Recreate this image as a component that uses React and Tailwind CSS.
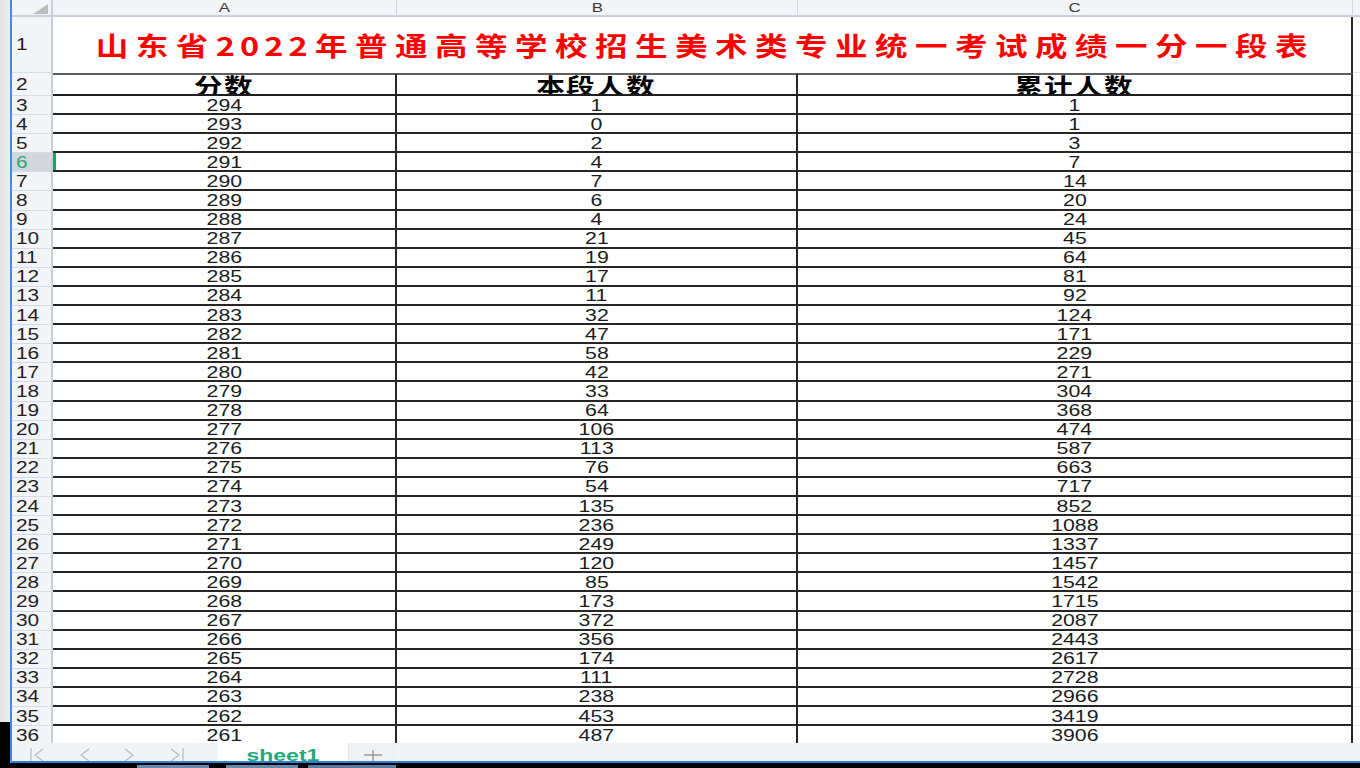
import React from 'react';

const rows = [
  [294, 1, 1], [293, 0, 1], [292, 2, 3], [291, 4, 7], [290, 7, 14], [289, 6, 20],
  [288, 4, 24], [287, 21, 45], [286, 19, 64], [285, 17, 81], [284, 11, 92],
  [283, 32, 124], [282, 47, 171], [281, 58, 229], [280, 42, 271], [279, 33, 304],
  [278, 64, 368], [277, 106, 474], [276, 113, 587], [275, 76, 663], [274, 54, 717],
  [273, 135, 852], [272, 236, 1088], [271, 249, 1337], [270, 120, 1457],
  [269, 85, 1542], [268, 173, 1715], [267, 372, 2087], [266, 356, 2443],
  [265, 174, 2617], [264, 111, 2728], [263, 238, 2966], [262, 453, 3419],
  [261, 487, 3906],
];

const grid = 'grid grid-cols-[41px_344px_401px_555px_7px]';
const sans = "font-['Liberation_Sans','Noto_Sans_CJK_SC',sans-serif]";
const cjk = "font-['Noto_Sans_CJK_SC','Liberation_Sans',sans-serif]";

const RowHead = ({ n, active }) => (
  <div
    className={`flex items-center overflow-hidden border-b border-r-2 border-b-[#d6dce6] border-r-[#c6cedb] pl-[4px] pt-[1px] ${
      active ? 'bg-[#d3d7dd] text-[#27a673]' : 'bg-[#f3f5f9] text-[#1f1f1f]'
    }`}
  >
    <span className={`${sans} inline-block origin-left scale-x-[1.3] text-[16px] leading-none`}>{n}</span>
  </div>
);

const Cell = ({ children, active }) => (
  <div className="relative flex items-center justify-center overflow-hidden border-r-2 border-b-2 border-[#262626] bg-white pt-[2px]">
    {active && <span className="absolute left-0 top-0 bottom-0 w-[3px] bg-[#1fa463]" />}
    <span className={`${sans} inline-block scale-x-[1.33] text-[16px] leading-none text-[#1c1c1c]`}>{children}</span>
  </div>
);

const Gutter = () => <div className="border-b border-[#e1e6ee] bg-white" />;

const Chevron = ({ dir, bar }) => (
  <svg width="18" height="14" viewBox="0 0 18 14" className="block">
    {bar === 'left' && <line x1="2" y1="1" x2="2" y2="14" stroke="#b7b9bd" strokeWidth="1.2" />}
    {bar === 'right' && <line x1="16" y1="1" x2="16" y2="14" stroke="#b7b9bd" strokeWidth="1.2" />}
    {dir === 'left' ? (
      <polyline points="14,2 6,8 14,14" fill="none" stroke="#b7b9bd" strokeWidth="1.2" />
    ) : (
      <polyline points="4,2 12,8 4,14" fill="none" stroke="#b7b9bd" strokeWidth="1.2" />
    )}
  </svg>
);

export default function App() {
  return (
    <div className="flex h-[768px] w-[1360px] flex-col overflow-hidden bg-black">
      <div className="flex h-[763px] shrink-0">
        <div className="flex w-[10px] flex-col">
          <div className="h-[722px] bg-gradient-to-r from-[#e4e4e4] to-[#ededed]" />
          <div className="flex-1 bg-black" />
        </div>
        <div className="w-[2px] bg-[#3a8ee3]" />

        <div className="flex flex-1 flex-col border-b-2 border-[#2f80d4]">
          {/* sheet */}
          <div className="h-[743px] shrink-0 overflow-hidden bg-white">
            {/* column letters */}
            <div className={`${grid} h-[17px] bg-[#f3f5f9]`}>
              <div className="relative border-r-2 border-b-2 border-[#c9d0db]">
                <svg width="16" height="10" viewBox="0 0 16 10" className="absolute left-[21px] top-[4px]">
                  <polygon points="15,0 15,10 0,10" fill="#bdbdbd" />
                </svg>
              </div>
              {['A', 'B', 'C'].map((c) => (
                <div key={c} className="flex items-center justify-center border-r border-b-2 border-r-[#d2d8e1] border-b-[#c9d0db]">
                  <span className={`${sans} inline-block scale-x-[1.3] text-[13px] leading-none text-[#3a3a3a]`}>{c}</span>
                </div>
              ))}
              <div className="border-b-2 border-[#c9d0db]" />
            </div>

            {/* title row */}
            <div className={`${grid} h-[56px]`}>
              <RowHead n={1} />
              <div className="col-span-3 flex items-center justify-center overflow-hidden border-r-2 border-[#2b2b2b] bg-white">
                <span className={`${cjk} inline-block scale-x-[1.25] whitespace-nowrap pl-[6px] text-[26px] font-bold leading-none text-[#ff0000]`}>
                  <span className="tracking-[6px]">山东省</span>
                  <span className="tracking-[4px]">202</span>
                  <span className="tracking-[6px]">2年普通高等学校招生美术类专业统一考试成绩一分一段表</span>
                </span>
              </div>
              <Gutter />
            </div>

            {/* header row */}
            <div className={`${grid} h-[23px]`}>
              <RowHead n={2} />
              {['分数', '本段人数', '累计人数'].map((h) => (
                <div
                  key={h}
                  className="flex items-start justify-center overflow-hidden border-t-2 border-r-2 border-b-2 border-t-[#5e5e5e] border-r-[#262626] border-b-[#1e1e1e] bg-white"
                >
                  <span className={`${cjk} -mt-[3px] inline-block scale-x-[1.3] text-[22px] font-bold leading-[24px] tracking-[1px] text-black`}>{h}</span>
                </div>
              ))}
              <Gutter />
            </div>

            {/* data rows */}
            {rows.map(([s, n, c], i) => {
              const idx = i + 3;
              const active = idx === 6;
              return (
                <div key={idx} className={`${grid} h-[19.1px]`}>
                  <RowHead n={idx} active={active} />
                  <Cell active={active}>{s}</Cell>
                  <Cell>{n}</Cell>
                  <Cell>{c}</Cell>
                  <Gutter />
                </div>
              );
            })}
          </div>

          {/* sheet tabs */}
          <div className="flex h-[18px] shrink-0 overflow-hidden bg-[#f2f3f5]">
            <div className="flex w-[206px] items-end gap-[28px] pl-[17px]">
              <Chevron dir="left" bar="left" />
              <Chevron dir="left" />
              <Chevron dir="right" />
              <Chevron dir="right" bar="right" />
            </div>
            <div className="flex w-[130px] items-start justify-center overflow-hidden bg-white pt-[4px]">
              <span className={`${sans} inline-block scale-x-[1.35] text-[17px] font-bold leading-none text-[#22a874]`}>sheet1</span>
            </div>
            <div className="flex w-[48px] items-end justify-center overflow-hidden border-l border-[#e3e5e8] bg-[#f0f1f3]">
              <svg width="18" height="14" viewBox="0 0 18 14" className="block">
                <line x1="9" y1="3" x2="9" y2="14" stroke="#8e8e8e" strokeWidth="1.3" />
                <line x1="0" y1="8" x2="18" y2="8" stroke="#8e8e8e" strokeWidth="1.3" />
              </svg>
            </div>
            <div className="flex-1" />
          </div>
        </div>
      </div>

      {/* taskbar strip */}
      <div className="flex flex-1 items-end bg-black pl-[137px]">
        <div className="h-[3px] w-[72px] bg-[#6a89ad]" />
        <div className="ml-[17px] h-[3px] w-[72px] bg-[#6a89ad]" />
        <div className="ml-[10px] h-[3px] w-[88px] bg-[#5a7aa0]" />
      </div>
    </div>
  );
}
